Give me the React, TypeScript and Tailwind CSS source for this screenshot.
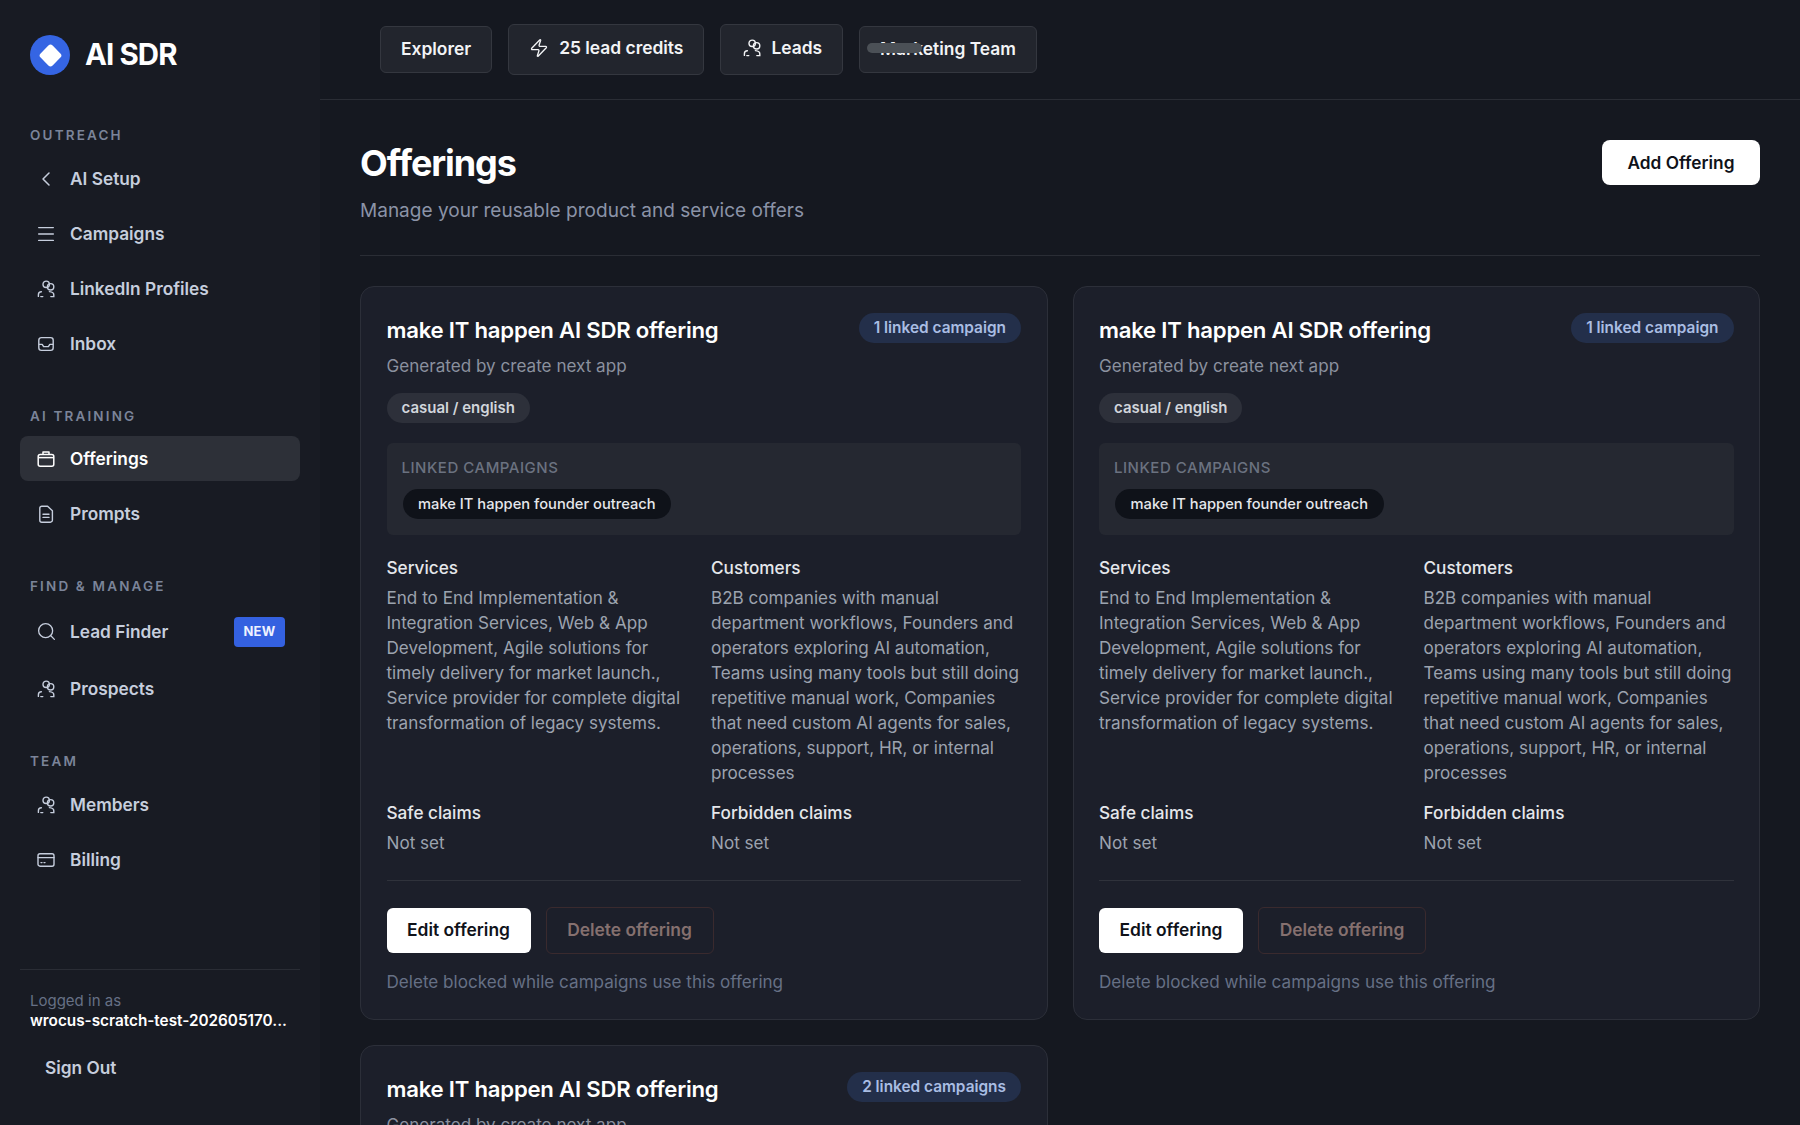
import React from "react";
import { ChevronLeft, Menu, Search, Zap } from "lucide-react";

const PeopleIcon = ({ className = "" }: { className?: string }) => (
    <svg viewBox="0 0 18 18" fill="none" stroke="currentColor" strokeWidth="1.4" strokeLinecap="round" className={className}>
        <circle cx="9.2" cy="4.3" r="3.2" />
        <circle cx="13.6" cy="6.8" r="3.2" />
        <path d="M1.4 16.4v-1.6c0-1.6 1.2-3 3-3" />
        <path d="M3.8 16.6h2" />
        <path d="M12.4 11.6c2.4.2 4.4 1.2 4.4 3.2v1.8h-3" />
    </svg>
);

const InboxIcon = ({ className = "" }: { className?: string }) => (
    <svg viewBox="0 0 18 18" fill="none" stroke="currentColor" strokeWidth="1.4" strokeLinejoin="round" className={className}>
        <rect x="1.8" y="2.6" width="14.4" height="12.8" rx="2.6" />
        <path d="M1.8 9.4h3.4l1.4 2.2h4.8l1.4-2.2h3.4" />
    </svg>
);

const CaseIcon = ({ className = "" }: { className?: string }) => (
    <svg viewBox="0 0 18 18" fill="none" stroke="currentColor" strokeWidth="1.5" strokeLinejoin="round" className={className}>
        <rect x="1.2" y="4.6" width="15.6" height="11.6" rx="2" />
        <path d="M6 4.6V2h6v2.6" />
        <path d="M1.2 7.6h15.6" />
    </svg>
);

const DocIcon = ({ className = "" }: { className?: string }) => (
    <svg viewBox="0 0 18 18" fill="none" stroke="currentColor" strokeWidth="1.4" strokeLinejoin="round" strokeLinecap="round" className={className}>
        <path d="M2.8 3.2a2 2 0 0 1 2-2h5.8l4.8 4.6v9.4a2 2 0 0 1-2 2H4.8a2 2 0 0 1-2-2z" />
        <path d="M6 9.2h6M6 12.4h6" />
    </svg>
);

const CardIcon = ({ className = "" }: { className?: string }) => (
    <svg viewBox="0 0 18 18" fill="none" stroke="currentColor" strokeWidth="1.4" strokeLinecap="round" className={className}>
        <rect x="1" y="2.8" width="16" height="12.4" rx="2" />
        <path d="M1 6.6h16" />
        <path d="M4 11.6h1M7 11.6h1" />
    </svg>
);

function SectionLabel({ children }: { children: React.ReactNode }) {
    return <div className="pl-[30px] text-[13.5px] leading-[16px] font-semibold tracking-[0.16em] text-[#7b8499]">{children}</div>;
}

function NavItem({ icon, label, active, badge }: { icon: React.ReactNode; label: string; active?: boolean; badge?: boolean }) {
    return (
        <div className={`mx-[20px] flex h-[45px] items-center rounded-[8px] pl-[17px] pr-[15px] text-[17.3px] font-semibold ${active ? "bg-[#2d3038] text-white" : "text-[#c6cedd]"}`}>
            <span className="mr-[15px] flex w-[18px] shrink-0 items-center justify-center">{icon}</span>
            <span className="flex-1">{label}</span>
            {badge && <span className="flex h-[30px] w-[51px] items-center justify-center rounded-[4px] bg-[#3461e0] text-[13px] font-bold tracking-[0.02em] text-[#eef2ff]">NEW</span>}
        </div>
    );
}

function Sidebar() {
    return (
        <aside className="flex h-[1125px] w-[320px] shrink-0 flex-col bg-[#181b23]">
            <div className="flex h-[110px] shrink-0 items-center gap-[15px] pl-[30px]">
                <div className="flex h-[40px] w-[40px] items-center justify-center rounded-full bg-[#3565e3]">
                    <div className="h-[17px] w-[17px] rotate-45 rounded-[3px] bg-white" />
                </div>
                <span className="text-[29.4px] leading-none font-bold tracking-[-0.03em] text-white">AI SDR</span>
            </div>

            <div className="mt-[17px]"><SectionLabel>OUTREACH</SectionLabel></div>
            <div className="mt-[13px] flex flex-col gap-[10px]">
                <NavItem icon={<ChevronLeft className="h-[24px] w-[24px] shrink-0" strokeWidth={1.5} />} label="AI Setup" />
                <NavItem icon={<Menu className="h-[22px] w-[22px] shrink-0" strokeWidth={1.5} />} label="Campaigns" />
                <NavItem icon={<PeopleIcon className="h-[18px] w-[18px]" />} label="LinkedIn Profiles" />
                <NavItem icon={<InboxIcon className="h-[18px] w-[18px]" />} label="Inbox" />
            </div>

            <div className="mt-[42px]"><SectionLabel>AI TRAINING</SectionLabel></div>
            <div className="mt-[12px] flex flex-col gap-[10px]">
                <NavItem active icon={<CaseIcon className="h-[18px] w-[18px]" />} label="Offerings" />
                <NavItem icon={<DocIcon className="h-[18px] w-[18px]" />} label="Prompts" />
            </div>

            <div className="mt-[42px]"><SectionLabel>FIND &amp; MANAGE</SectionLabel></div>
            <div className="mt-[15px] flex flex-col gap-[12px]">
                <NavItem badge icon={<Search className="h-[21px] w-[21px] shrink-0" strokeWidth={1.5} />} label="Lead Finder" />
                <NavItem icon={<PeopleIcon className="h-[18px] w-[18px]" />} label="Prospects" />
            </div>

            <div className="mt-[42px]"><SectionLabel>TEAM</SectionLabel></div>
            <div className="mt-[13px] flex flex-col gap-[10px]">
                <NavItem icon={<PeopleIcon className="h-[18px] w-[18px]" />} label="Members" />
                <NavItem icon={<CardIcon className="h-[18px] w-[18px]" />} label="Billing" />
            </div>

            <div className="mx-[20px] mt-auto border-t border-[#2a2d35] pb-[35px]">
                <div className="pt-[21px] pl-[10px] text-[15px] leading-[20px] text-[#667085]">Logged in as</div>
                <div className="pl-[10px] text-[15.3px] leading-[20px] font-semibold text-white">wrocus-scratch-test-202605170...</div>
                <div className="mt-[14px] flex h-[45px] items-center pl-[25px] text-[17.3px] font-semibold text-[#c6cedd]">Sign Out</div>
            </div>
        </aside>
    );
}

function TopButton({ children, tall }: { children: React.ReactNode; tall?: boolean }) {
    return (
        <div className={`flex items-center gap-[10px] rounded-[6px] border border-[#34373f] bg-[#22252d] px-[20px] text-[17.4px] font-semibold text-[#f3f4f6] ${tall ? "h-[51px] pb-[3px]" : "h-[47px]"}`}>
            {children}
        </div>
    );
}

function Field({ title, text }: { title: string; text: string }) {
    return (
        <div>
            <div className="text-[17.2px] leading-[25px] font-medium text-[#e5e7eb]">{title}</div>
            <div className="mt-[5px] text-[17.1px] leading-[25px] text-[#9ca3af]">{text}</div>
        </div>
    );
}

const services =
    "End to End Implementation & Integration Services, Web & App Development, Agile solutions for timely delivery for market launch., Service provider for complete digital transformation of legacy systems.";
const customers =
    "B2B companies with manual department workflows, Founders and operators exploring AI automation, Teams using many tools but still doing repetitive manual work, Companies that need custom AI agents for sales, operations, support, HR, or internal processes";

function OfferingCard({ linked }: { linked: string }) {
    return (
        <div className="rounded-[14px] border border-[#2c2f39] bg-[#1c1f2a] px-[25.5px] pt-[25px] pb-[25px]">
            <div className="flex items-start justify-between">
                <h3 className="mt-[2px] text-[22.15px] leading-[32px] font-semibold tracking-[-0.01em] text-white">make IT happen AI SDR offering</h3>
                <span className="mt-[1px] flex h-[30px] items-center rounded-full bg-[#232f4a] px-[15px] text-[15.4px] font-semibold text-[#a9bde3]">{linked}</span>
            </div>
            <div className="mt-[7px] text-[17.1px] leading-[25px] text-[#8b919f]">Generated by create next app</div>
            <span className="mt-[15px] inline-flex h-[30px] items-center rounded-full bg-[#2d303a] px-[15px] text-[15px] font-semibold text-[#d1d5db]">casual / english</span>
            <div className="mt-[20px] h-[92px] rounded-[6px] bg-[#252831] px-[15px] pt-[15px]">
                <div className="text-[15px] leading-[20px] font-medium tracking-[0.035em] text-[#6b7280]">LINKED CAMPAIGNS</div>
                <span className="mt-[11px] ml-[1px] inline-flex h-[30px] items-center rounded-full bg-[#0f1219] px-[15.5px] text-[14.7px] font-medium text-[#e5e7eb]">make IT happen founder outreach</span>
            </div>
            <div className="mt-[20px] grid grid-cols-[294.5px_1fr] gap-x-[30px] gap-y-[15px]">
                <Field title="Services" text={services} />
                <Field title="Customers" text={customers} />
                <Field title="Safe claims" text="Not set" />
                <Field title="Forbidden claims" text="Not set" />
            </div>
            <div className="mt-[25px] border-t border-[#2f323b] pt-[26px]">
                <div className="flex items-center gap-[15px]">
                    <button className="h-[45px] w-[144px] rounded-[6px] bg-white text-[17.4px] font-semibold text-[#0f1219]">Edit offering</button>
                    <button className="h-[47px] w-[168px] rounded-[6px] border border-[#3a2a2e] text-[17.4px] font-semibold text-[#85706f]">Delete offering</button>
                </div>
                <div className="mt-[15px] text-[17.1px] leading-[25px] text-[#667085]">Delete blocked while campaigns use this offering</div>
            </div>
        </div>
    );
}

export default function App() {
    return (
        <div className="flex h-screen overflow-hidden bg-[#151820] font-['Inter',sans-serif]">
            <Sidebar />
            <main className="flex min-w-0 flex-1 flex-col">
                <header className="flex h-[100px] shrink-0 items-center gap-[16px] border-b border-[#2a2d35] pl-[60px]">
                    <TopButton>Explorer</TopButton>
                    <TopButton tall><Zap className="h-[20px] w-[20px]" strokeWidth={1.6} />25 lead credits</TopButton>
                    <TopButton tall><PeopleIcon className="ml-[2px] h-[18px] w-[18px]" />Leads</TopButton>
                    <div className="relative">
                        <TopButton>Marketing Team</TopButton>
                        <div className="absolute top-[17px] left-[8px] h-[10px] w-[55px] rounded-full bg-[#4b5056]" />
                    </div>
                </header>
                <div className="px-[40px] pt-[40px]">
                    <div className="flex items-start justify-between border-b border-[#2a2d35] pb-[30px]">
                        <div>
                            <h1 className="text-[36px] leading-[46px] font-bold tracking-[-0.03em] text-white">Offerings</h1>
                            <p className="mt-[11px] text-[19.05px] leading-[28px] text-[#8b93a7]">Manage your reusable product and service offers</p>
                        </div>
                        <button className="h-[45px] w-[158px] rounded-[8px] bg-white text-[17.3px] font-semibold text-[#0f1219]">Add Offering</button>
                    </div>
                    <div className="mt-[30px] grid grid-cols-2 gap-[25px]">
                        <OfferingCard linked="1 linked campaign" />
                        <OfferingCard linked="1 linked campaign" />
                        <OfferingCard linked="2 linked campaigns" />
                    </div>
                </div>
            </main>
        </div>
    );
}
